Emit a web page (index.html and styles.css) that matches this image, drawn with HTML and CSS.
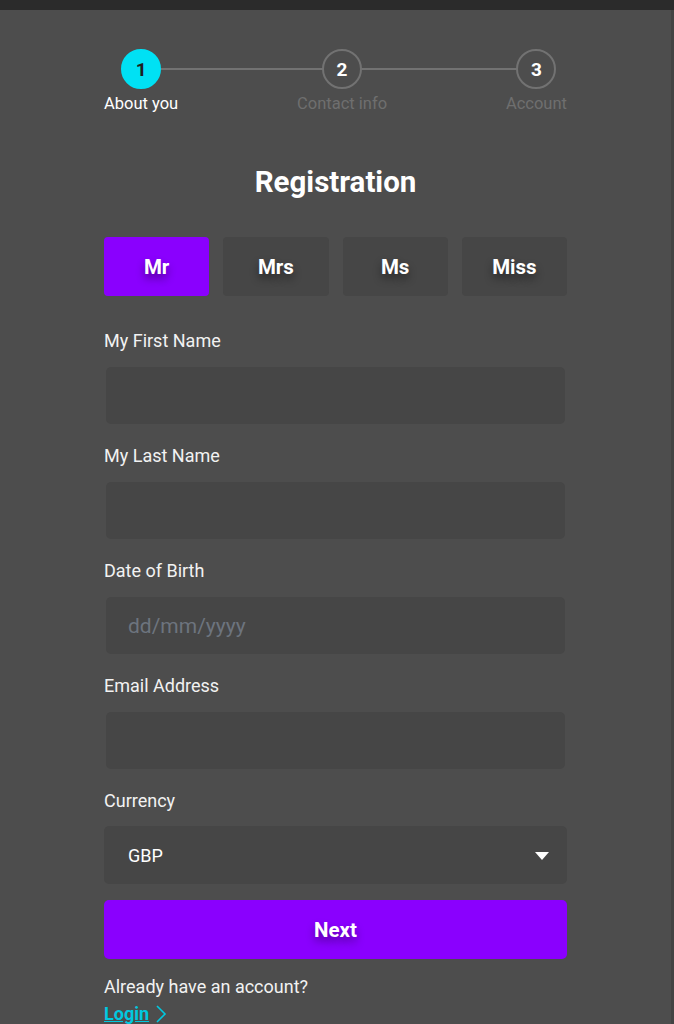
FILE: index.html
```html
<!DOCTYPE html>
<html lang="en">
<head>
<meta charset="utf-8">
<title>Registration</title>
<link rel="stylesheet" href="styles.css">
</head>
<body>
<div class="topbar"></div>
<div class="frame">
  <main class="page">
    <div class="stepper">
      <div class="stepper-line"></div>
      <div class="step active">
        <div class="step-circle">1</div>
        <div class="step-label">About you</div>
      </div>
      <div class="step">
        <div class="step-circle">2</div>
        <div class="step-label">Contact info</div>
      </div>
      <div class="step">
        <div class="step-circle">3</div>
        <div class="step-label">Account</div>
      </div>
    </div>

    <h1 class="title">Registration</h1>

    <div class="titles">
      <button class="title-btn selected">Mr</button>
      <button class="title-btn">Mrs</button>
      <button class="title-btn">Ms</button>
      <button class="title-btn">Miss</button>
    </div>

    <div class="field">
      <label class="field-label">My First Name</label>
      <input class="field-input" type="text">
    </div>
    <div class="field">
      <label class="field-label">My Last Name</label>
      <input class="field-input" type="text">
    </div>
    <div class="field">
      <label class="field-label">Date of Birth</label>
      <input class="field-input" type="text" placeholder="dd/mm/yyyy">
    </div>
    <div class="field">
      <label class="field-label">Email Address</label>
      <input class="field-input" type="text">
    </div>
    <div class="field currency">
      <label class="field-label">Currency</label>
      <div class="select">
        <span>GBP</span>
        <svg class="caret" width="14" height="8" viewBox="0 0 14 8"><path d="M0 0 L14 0 L7 8 Z" fill="#ffffff"/></svg>
      </div>
    </div>

    <button class="next-btn">Next</button>

    <p class="already">Already have an account?</p>
    <a class="login" href="#">Login</a><svg class="chev" width="12" height="18" viewBox="0 0 12 18"><path d="M2 1 L10 9 L2 17" fill="none" stroke="#00c9e0" stroke-width="1.6"/></svg>
  </main>
</div>
</body>
</html>
```

FILE: styles.css
```css
* { box-sizing: border-box; }

html, body {
  margin: 0;
  padding: 0;
  background: #4d4d4d;
  font-family: Roboto, "Liberation Sans", sans-serif;
  color: #f2f2f2;
}

.topbar {
  height: 10px;
  background: #2b2b2b;
}

.frame {
  border-right: 3px solid #434343;
  min-height: 1014px;
}

.page {
  width: 463px;
  margin: 0 auto;
  padding-top: 39px;
}

/* Stepper */
.stepper {
  position: relative;
  display: flex;
  justify-content: space-between;
}

.stepper-line {
  position: absolute;
  top: 19px;
  left: 36px;
  right: 31px;
  height: 2px;
  background: #727272;
}

.step {
  position: relative;
  display: flex;
  flex-direction: column;
  align-items: center;
}

.step-circle {
  width: 40px;
  height: 40px;
  border-radius: 50%;
  border: 2px solid #727272;
  background: #4d4d4d;
  display: flex;
  align-items: center;
  justify-content: center;
  font-weight: 700;
  font-size: 19px;
  color: #ffffff;
}

.step.active .step-circle {
  background: #00e1f4;
  border-color: #00e1f4;
  color: #1e1e1e;
}

.step-label {
  margin-top: 5px;
  font-size: 16.5px;
  line-height: 20px;
  color: #6f6f6f;
}

.step.active .step-label {
  color: #ffffff;
}

/* Title */
.title {
  margin: 52px 0 0;
  text-align: center;
  font-size: 29.5px;
  line-height: 32px;
  font-weight: 700;
  color: #ffffff;
}

/* Salutation */
.titles {
  margin-top: 39px;
  display: grid;
  grid-template-columns: repeat(4, 1fr);
  column-gap: 14px;
}

.title-btn {
  height: 59px;
  border: none;
  border-radius: 4px;
  background: #464646;
  color: #ffffff;
  font-family: Roboto, "Liberation Sans", sans-serif;
  font-weight: 700;
  font-size: 20.5px;
  text-shadow: 0 5px 9px rgba(0, 0, 0, 0.45);
  padding: 0;
}

.title-btn.selected {
  background: #8a00fe;
}

/* Fields */
.field {
  margin-top: 35px;
  display: flex;
  flex-direction: column;
}

.field + .field {
  margin-top: 22px;
}

.field-label {
  font-size: 18px;
  line-height: 20px;
  color: #f2f2f2;
}

.field-input {
  margin: 16px 2px 0;
  height: 57px;
  border: none;
  border-radius: 5px;
  background: #464646;
  padding: 0 22px;
  font-family: Roboto, "Liberation Sans", sans-serif;
  font-size: 21px;
  color: #ffffff;
  outline: none;
}

.field-input::placeholder {
  color: #6d747e;
}

.field.currency {
  margin-top: 22px;
}

.select {
  margin-top: 15px;
  height: 58px;
  border-radius: 5px;
  background: #464646;
  padding: 0 18px 0 24px;
  display: flex;
  align-items: center;
  justify-content: space-between;
  font-size: 18px;
  color: #ffffff;
}

.caret {
  margin-top: 2px;
}

/* Next */
.next-btn {
  margin-top: 16px;
  width: 100%;
  height: 59px;
  border: none;
  border-radius: 5px;
  background: #8a00fe;
  color: #ffffff;
  font-family: Roboto, "Liberation Sans", sans-serif;
  font-weight: 700;
  font-size: 20.5px;
  text-shadow: 0 5px 9px rgba(0, 0, 0, 0.4);
}

.already {
  margin: 17px 0 0;
  font-size: 18px;
  line-height: 22px;
  color: #f2f2f2;
}

.login {
  display: inline-block;
  margin-top: 5px;
  font-size: 18px;
  line-height: 22px;
  font-weight: 700;
  color: #00c9e0;
  text-decoration: underline;
}

.chev {
  margin-left: 6px;
  vertical-align: -3px;
}
```
